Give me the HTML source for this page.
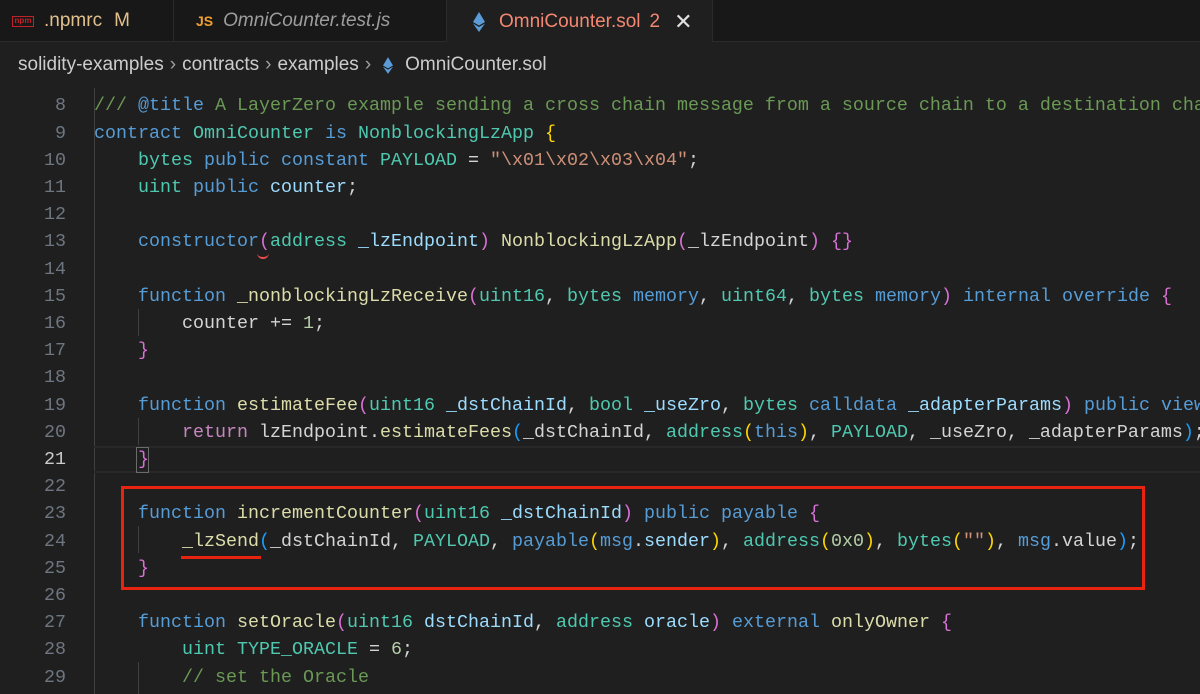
<!DOCTYPE html>
<html><head><meta charset="utf-8"><style>
*{margin:0;padding:0;box-sizing:border-box}
body{width:1200px;height:694px;overflow:hidden;background:#1f1f1f;font-family:"Liberation Sans",sans-serif;position:relative}
.tabs{position:absolute;left:0;top:0;width:1200px;height:42px;background:#181818;border-bottom:1px solid #2b2b2b}
.tab{position:absolute;top:0;height:42px;display:flex;align-items:center;font-size:19px;border-right:1px solid #2b2b2b}
.bc{position:absolute;top:42px;left:0;width:1200px;height:46px;background:#1f1f1f;color:#cccccc;font-size:19px;display:flex;align-items:center;padding-left:18px}
.bc .s{color:#a0a0a0;margin:0 6px}
.ed{position:absolute;top:88px;left:0;width:1200px;height:606px;overflow:hidden;font-family:"Liberation Mono",monospace;font-size:18.33px}
.ln{position:absolute;left:0;width:66px;text-align:right;color:#6e7681;height:27.2px;line-height:27.2px}
.cl{position:absolute;left:94px;white-space:pre;color:#d4d4d4;height:27.2px;line-height:27.2px}
.k{color:#569cd6}.t{color:#4ec9b0}.f{color:#dcdcaa}.v{color:#9cdcfe}.p{color:#c586c0}.s2{color:#ce9178}.n{color:#b5cea8}.c{color:#6a9955}
.b1{color:#ffd700}.b2{color:#da70d6}.b3{color:#179fff}
.g{position:absolute;width:1px;background:#404040}
</style></head><body>
<div class="tabs">
 <div class="tab" style="left:0;width:174px;padding-left:12px">
  <span style="display:inline-block;width:22px;height:11px;border:1.5px solid #c12127;margin-right:10px;font-size:8px;color:#c12127;line-height:8px;text-align:center;font-weight:bold">npm</span>
  <span style="color:#e2c08d">.npmrc</span><span style="color:#e2c08d;margin-left:12px">M</span></div>
 <div class="tab" style="left:174px;width:273px;padding-left:22px">
  <span style="color:#f0a030;font-weight:bold;font-size:14px;margin-right:10px">JS</span>
  <span style="color:#9d9d9d;font-style:italic;white-space:nowrap">OmniCounter.test.js</span></div>
 <div class="tab" style="left:447px;width:266px;background:#1f1f1f;padding-left:26px;height:43px">
  <svg width="12" height="20" viewBox="0 0 12 20" style="margin-right:14px"><path d="M6 0L0 10L6 13.5L12 10Z" fill="#5a9bd8"/><path d="M0 11.5L6 20L12 11.5L6 15Z" fill="#5a9bd8"/></svg>
  <span style="color:#f48771">OmniCounter.sol</span><span style="color:#f48771;margin-left:9px">2</span>
  <span style="color:#e0e0e0;margin-left:14px;font-size:22px">✕</span></div>
</div>
<div class="bc">solidity-examples<span class="s">›</span>contracts<span class="s">›</span>examples<span class="s">›</span>
 <svg width="10" height="17" viewBox="0 0 12 20" style="margin:0 12px 0 6px"><path d="M6 0L0 10L6 13.5L12 10Z" fill="#5a9bd8"/><path d="M0 11.5L6 20L12 11.5L6 15Z" fill="#5a9bd8"/></svg>OmniCounter.sol</div>
<div class="ed" id="ed">
<div class="g" style="left:94px;top:0;height:606px"></div>
<div class="g" style="left:138px;top:221px;height:27px"></div>
<div class="g" style="left:138px;top:330px;height:27px"></div>
<div class="g" style="left:138px;top:438px;height:27px"></div>
<div class="g" style="left:138px;top:574px;height:40px"></div>
<div style="position:absolute;left:94px;top:358px;width:1106px;height:27px;border-top:2px solid #282828;border-bottom:2px solid #282828"></div>
<div style="position:absolute;left:136px;top:359px;width:13px;height:26px;border:1px solid #6b6b6b"></div>
</div>
<div style="position:absolute;left:121px;top:486px;width:1024px;height:104px;border:3px solid #e8230f"></div>
<div style="position:absolute;left:181px;top:556px;width:80px;height:3px;background:#e8230f"></div>
<div style="position:absolute;left:257px;top:253px;width:12px;height:6px;border-bottom:2px solid #f14c4c;border-radius:0 0 6px 6px"></div>
<script>
var L={
7:'',
8:'<span class="c">/// </span><span class="k">@title</span><span class="c"> A LayerZero example sending a cross chain message from a source chain to a destination chain</span>',
9:'<span class="k">contract</span> <span class="t">OmniCounter</span> <span class="k">is</span> <span class="t">NonblockingLzApp</span> <span class="b1">{</span>',
10:'    <span class="t">bytes</span> <span class="k">public</span> <span class="k">constant</span> <span class="t">PAYLOAD</span> = <span class="s2">"\\x01\\x02\\x03\\x04"</span>;',
11:'    <span class="t">uint</span> <span class="k">public</span> <span class="v">counter</span>;',
12:'',
13:'    <span class="k">constructor</span><span class="b2">(</span><span class="t">address</span> <span class="v">_lzEndpoint</span><span class="b2">)</span> <span class="f">NonblockingLzApp</span><span class="b2">(</span>_lzEndpoint<span class="b2">)</span> <span class="b2">{}</span>',
14:'',
15:'    <span class="k">function</span> <span class="f">_nonblockingLzReceive</span><span class="b2">(</span><span class="t">uint16</span>, <span class="t">bytes</span> <span class="k">memory</span>, <span class="t">uint64</span>, <span class="t">bytes</span> <span class="k">memory</span><span class="b2">)</span> <span class="k">internal</span> <span class="k">override</span> <span class="b2">{</span>',
16:'        counter += <span class="n">1</span>;',
17:'    <span class="b2">}</span>',
18:'',
19:'    <span class="k">function</span> <span class="f">estimateFee</span><span class="b2">(</span><span class="t">uint16</span> <span class="v">_dstChainId</span>, <span class="t">bool</span> <span class="v">_useZro</span>, <span class="t">bytes</span> <span class="k">calldata</span> <span class="v">_adapterParams</span><span class="b2">)</span> <span class="k">public</span> <span class="k">view</span>',
20:'        <span class="p">return</span> lzEndpoint.<span class="f">estimateFees</span><span class="b3">(</span>_dstChainId, <span class="t">address</span><span class="b1">(</span><span class="k">this</span><span class="b1">)</span>, <span class="t">PAYLOAD</span>, _useZro, _adapterParams<span class="b3">)</span>;',
21:'    <span class="b2">}</span>',
22:'',
23:'    <span class="k">function</span> <span class="f">incrementCounter</span><span class="b2">(</span><span class="t">uint16</span> <span class="v">_dstChainId</span><span class="b2">)</span> <span class="k">public</span> <span class="k">payable</span> <span class="b2">{</span>',
24:'        <span class="f">_lzSend</span><span class="b3">(</span>_dstChainId, <span class="t">PAYLOAD</span>, <span class="k">payable</span><span class="b1">(</span><span class="k">msg</span>.<span class="v">sender</span><span class="b1">)</span>, <span class="t">address</span><span class="b1">(</span><span class="n">0x0</span><span class="b1">)</span>, <span class="t">bytes</span><span class="b1">(</span><span class="s2">""</span><span class="b1">)</span>, <span class="k">msg</span>.value<span class="b3">)</span>;',
25:'    <span class="b2">}</span>',
26:'',
27:'    <span class="k">function</span> <span class="f">setOracle</span><span class="b2">(</span><span class="t">uint16</span> <span class="v">dstChainId</span>, <span class="t">address</span> <span class="v">oracle</span><span class="b2">)</span> <span class="k">external</span> <span class="f">onlyOwner</span> <span class="b2">{</span>',
28:'        <span class="t">uint</span> <span class="t">TYPE_ORACLE</span> = <span class="n">6</span>;',
29:'        <span class="c">// set the Oracle</span>'};
var h='';
for(var n=7;n<=29;n++){var yy=(106-88-13.6)+(n-8)*27.2;
h+='<div class="ln" style="top:'+yy+'px'+(n==21?';color:#cccccc':'')+'">'+n+'</div><div class="cl" style="top:'+yy+'px">'+L[n]+'</div>';}
document.getElementById('ed').insertAdjacentHTML('beforeend',h);
</script>
</body></html>
